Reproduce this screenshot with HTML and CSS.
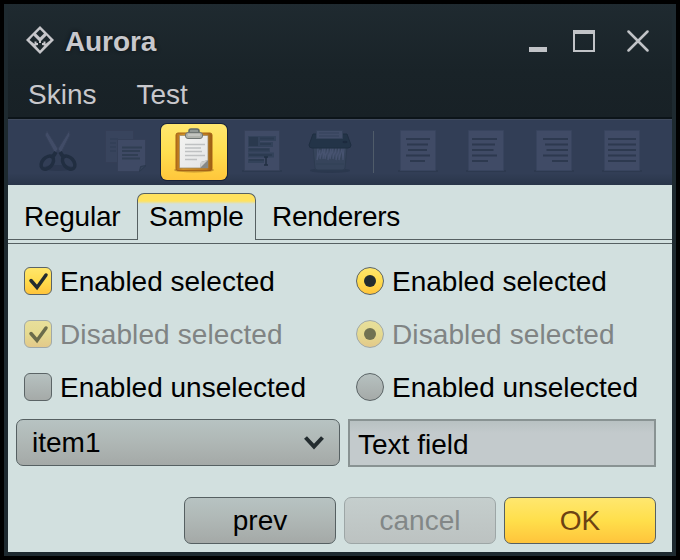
FILE: index.html
```html
<!DOCTYPE html>
<html lang="en">
<head>
<meta charset="utf-8">
<title>Aurora</title>
<link rel="stylesheet" href="styles.css">
</head>
<body>
<div class="window">
  <header class="header">
    <div class="titlebar">
      <svg class="logo" width="30" height="30" viewBox="0 0 30 30">
        <path d="M15 1 29 15 15 29 1 15Z" fill="#c6c6ca"/>
        <g fill="#1c272c">
          <path d="m15 4.500 4 4-4 4-4-4z"/>
          <path d="m8.500 10.500 5.500 5.500v2h-2.500v-1.500H9.500v2.500L4.500 15z"/>
          <path d="m21.500 10.500-5.500 5.500v2h2.500v-1.500h2v2.500l5-4z"/>
          <path d="m10.500 20.500 2.500-.5v-2h4v2l2.500.5L15 25.500z"/>
        </g>
      </svg>
      <h1 class="title">Aurora</h1>
      <div class="controls">
        <svg width="18" height="22" viewBox="0 0 18 22"><path d="M0 17h18v5H0z" fill="#c1c3c7"/></svg>
        <svg width="22" height="22" viewBox="0 0 22 22"><path fill="#c1c3c7" fill-rule="evenodd" d="M0 0h22v22H0zM2 4v16h18V4z"/></svg>
        <svg width="22" height="22" viewBox="0 0 22 22"><path d="m1.500 1.500 19 19m0-19-19 19" stroke="#c1c3c7" stroke-width="2.500" stroke-linecap="round"/></svg>
      </div>
    </div>
    <nav class="menu"><span>Skins</span><span>Test</span></nav>
  </header>
  <div class="toolbar">
    <span class="tool">
      <svg width="44" height="48" viewBox="0 0 44 48">
        <ellipse cx="22" cy="41" rx="16" ry="3" fill="#28344a" opacity=".6"/>
        <path d="m11 4 13 21-4 3L9 8zM33 4 20 25l4 3L34 8z" fill="#414c67" stroke="#364159"/>
        <g fill="none" stroke="#212e41" stroke-width="3.500">
          <ellipse cx="11" cy="35.500" rx="5" ry="7.500" transform="rotate(42 11 36)"/>
          <ellipse cx="33" cy="35.500" rx="5" ry="7.500" transform="rotate(-42 33 36)"/>
          <path d="m16 31 4-6m8 6-4-6" stroke-width="4"/>
        </g>
      </svg>
    </span>
    <span class="tool">
      <svg width="44" height="48" viewBox="0 0 44 48">
        <path d="M1.500 3.500h28v32h-28z" fill="#38445d" stroke="#343e56"/>
        <path d="M6 12h8M6 16h6M6 20h6M6 24h6" stroke="#334058" stroke-width="2"/>
        <path d="M13.500 12.500h28v26l-6 6h-22z" fill="#3f4a65" stroke="#343f57"/>
        <path d="M18 20.500h20M18 24h18M18 28h16M18 31.500h18" stroke="#303e53" stroke-width="2"/>
        <path d="m35.500 44.500 1-5 5.500-1z" fill="#354259" stroke="#2b394e"/>
      </svg>
    </span>
    <span class="tool tool-active">
      <svg width="44" height="48" viewBox="0 0 44 48">
        <defs><linearGradient id="board" x2="1" y2="0"><stop stop-color="#b5711c"/><stop offset=".2" stop-color="#d19127"/><stop offset=".85" stop-color="#bd7a1e"/><stop offset="1" stop-color="#965b14"/></linearGradient>
        <linearGradient id="paper" y2="1"><stop stop-color="#f3f3f1"/><stop offset="1" stop-color="#e4e5e6"/></linearGradient></defs>
        <ellipse cx="22" cy="43" rx="20" ry="2.500" fill="#9b6a20" opacity=".55"/>
        <rect x="4" y="6" width="36" height="37.500" rx="2" fill="url(#board)" stroke="#a66316"/>
        <path d="M7.500 8.500h28.500v32.500H7.500z" fill="url(#paper)" stroke="#9a8761" stroke-width=".7"/>
        <path d="M13 17.500h20M13 21h16M13 24.500h17M13 28.500h20M13 32.500h12" stroke="#bfc1c2" stroke-width="1.600"/>
        <path d="M36 33v8h-8l1-6z" fill="#868987"/><path d="m36 33-8 8 1-6z" fill="#cfd0cd"/>
        <path d="M17 7V4q0-2 2-2h6q2 0 2 2v3" fill="#929995" stroke="#606a69" stroke-width="1.500"/>
        <rect x="13.500" y="5.500" width="17" height="6" rx="2.500" fill="#b0b3ac" stroke="#707774"/>
        <path d="M16 8h12" stroke="#ced0cb" stroke-width="1.300"/>
      </svg>
    </span>
    <span class="tool">
      <svg width="44" height="48" viewBox="0 0 44 48">
        <path d="M2 43h40v2H2z" fill="#2c394f"/>
        <path d="M4.500 3.500h35v40h-35z" fill="#404b66" stroke="#364159"/>
        <path d="M8 9h28v5H20v1h13v5H8zM8 21h22v4H8zM8 25.500h26v5H8zM8 32h16v4H8z" fill="#33425a"/>
        <path d="M9 10h9v9H9z" fill="#2a394e"/>
        <path d="M20 11.500h14M20 17h11M9 22.500h20M9 28h23M9 33h15" stroke="#2c3b51" stroke-width="1.800"/>
        <path d="M24 30h4m-2 0v8m-2 0h4" stroke="#202f42" stroke-width="1.500"/>
      </svg>
    </span>
    <span class="tool">
      <svg width="44" height="48" viewBox="0 0 44 48">
        <ellipse cx="22" cy="43.500" rx="20" ry="2.500" fill="#2b384e"/>
        <path d="M5 20h34l-2 21q0 2-3 2H10q-3 0-3-2z" fill="#36445b" stroke="#2d3b50"/>
        <path d="M8 37h28" stroke="#314057"/>
        <path d="m10 21-1 12 3-10v9l3-11v11l2-11v11l3-11v12l3-12-1 11 3-11v11l3-11v12l3-12v12l3-12 1 12 1-12" fill="none" stroke="#475370" stroke-width="1.200"/>
        <path d="M5 7h34l4 11q0 3-3 3H4q-3 0-3-3z" fill="#233448" stroke="#1f2e41"/>
        <path d="M8.500 3.500h26v8h-26z" fill="#414d68" stroke="#34425a"/>
        <path d="M11 6h20M11 9h20" stroke="#35435b"/><ellipse cx="37" cy="15" rx="2.500" ry="1.300" fill="#1c2a3e"/>
      </svg>
    </span>
    <i class="separator"></i>
    <span class="tool"><svg width="44" height="48" viewBox="0 0 44 48"><path class="foot" d="M2 43h40v2H2z"/><path class="page" d="M4.500 3.500h35v40h-35z"/><path class="lines" d="M10 12h24M11 17.500h21M12 23h19M10 28.500h24M14 34h15"/></svg></span>
    <span class="tool"><svg width="44" height="48" viewBox="0 0 44 48"><path class="foot" d="M2 43h40v2H2z"/><path class="page" d="M4.500 3.500h35v40h-35z"/><path class="lines" d="M8 12h25M8 17.500h23M8 23h21.500M8 28.500h25M8 34h16"/></svg></span>
    <span class="tool"><svg width="44" height="48" viewBox="0 0 44 48"><path class="foot" d="M2 43h40v2H2z"/><path class="page" d="M4.500 3.500h35v40h-35z"/><path class="lines" d="M11 12h25M13 17.500h23M14.500 23H36M11 28.500h25M20 34h16"/></svg></span>
    <span class="tool"><svg width="44" height="48" viewBox="0 0 44 48"><path class="foot" d="M2 43h40v2H2z"/><path class="page" d="M4.500 3.500h35v40h-35z"/><path class="lines" d="M8 12h28M8 17.500h28M8 23h28M8 28.500h28M8 34h28"/></svg></span>
  </div>
  <main class="content">
    <div class="tabs">
      <span class="tab tab-first">Regular</span>
      <span class="tab tab-active">Sample</span>
      <span class="tab tab-last">Renderers</span>
    </div>
    <div class="options">
      <div class="option"><span class="mark selected"><svg width="26" height="26" viewBox="0 0 26 26"><path class="check" d="m6 12.500 6 7L21 7"/></svg></span>Enabled selected</div>
      <div class="option"><span class="mark radio selected"><i class="dot"></i></span>Enabled selected</div>
      <div class="option disabled"><span class="mark selected"><svg width="26" height="26" viewBox="0 0 26 26"><path class="check" d="m6 12.500 6 7L21 7"/></svg></span>Disabled selected</div>
      <div class="option disabled"><span class="mark radio selected"><i class="dot"></i></span>Disabled selected</div>
      <div class="option"><span class="mark"></span>Enabled unselected</div>
      <div class="option"><span class="mark radio"></span>Enabled unselected</div>
    </div>
    <div class="fields">
      <div class="combo">item1<svg width="22" height="16" viewBox="0 0 22 16"><path d="m2.500 2.500 8.500 9 8.500-9" fill="none" stroke="#232c2f" stroke-width="4"/></svg></div>
      <div class="textfield">Text field</div>
    </div>
    <div class="buttons">
      <button class="button">prev</button>
      <button class="button cancel" disabled>cancel</button>
      <button class="button ok">OK</button>
    </div>
  </main>
</div>
</body>
</html>
```
FILE: styles.css
```css
* { box-sizing: border-box; }
body {
  margin: 0;
  width: 680px;
  height: 560px;
  padding: 4px;
  background: #000;
  font: 28px/32px "Liberation Sans", Arial, sans-serif;
  color: #000;
  overflow: hidden;
}
svg { display: block; flex: none; }
.window {
  height: 552px;
  padding: 0 4px 4px;
  background: #1e2a30;
  display: flex;
  flex-direction: column;
}
.header {
  height: 115px;
  background: linear-gradient(#1f2a30, #192328 60%, #182126);
  border-bottom: 2px solid #0c1419;
  color: #c8c8cc;
}
.titlebar { display: flex; align-items: center; height: 74px; padding: 0 23px 0 17px; }
.logo { margin-top: -2px; }
.title {
  margin: 2px 0 0 10px;
  font-size: 28px;
  letter-spacing: -.1px;
  text-shadow: 0 0 4px #0b1013;
}
.controls { display: flex; gap: 26px; margin-left: auto; }
.controls svg:last-child { margin-left: 6px; }
.menu { display: flex; gap: 40px; padding: 1px 20px 0; }
.toolbar {
  height: 66px;
  padding: 4px 0 0 17px;
  display: flex;
  gap: 2px;
  background: linear-gradient(#323e56 82%, #293549);
  border-top: 1px solid #414b5e;
}
.tool { width: 66px; height: 56px; padding-top: 3px; display: flex; justify-content: center; border-radius: 6px; }
.tool-active {
  background: linear-gradient(#ffe76f, #ffdf50 50%, #ffc63b);
  box-shadow: 0 0 0 1px #182238;
}
.separator { width: 1px; height: 42px; margin: 7px 9px 0 8px; background: #505c6a; }
.foot { fill: #2d394f; }
.page { fill: #404b66; stroke: #38445e; }
.lines { stroke: #2d394f; stroke-width: 2; }
.content { height: 367px; background: #d2e0df; }
.tabs {
  display: flex;
  height: 59px;
  padding-top: 8px;
  border-bottom: 1px solid #566062;
}
.tab { height: 47px; border-bottom: 1px solid #566062; padding-top: 8px; white-space: nowrap; }
.tab-first { width: 129px; padding-left: 16px; letter-spacing: -.25px; }
.tab-active {
  width: 119px;
  padding: 7px 0 0 11px;
  border: 1px solid #566062;
  border-bottom: 0;
  border-radius: 7px 7px 0 0;
  background: linear-gradient(#ffe25f 7px, #d2e0df 10px);
}
.tab-last { flex: 1; padding-left: 16px; letter-spacing: -.3px; }
.options {
  display: grid;
  grid-template-columns: 332px 1fr;
  grid-template-rows: repeat(3, 53px);
  padding: 11px 0 0 16px;
}
.option { display: flex; align-items: center; gap: 8px; white-space: nowrap; }
.disabled { color: #808484; letter-spacing: .1px; }
.mark {
  width: 28px;
  height: 28px;
  margin-bottom: 2px;
  flex: none;
  border: 1px solid #5b6466;
  border-radius: 6px;
  background: linear-gradient(#b6c1c0, #a5aaa8);
}
.selected { background: linear-gradient(#ffe66b, #ffdc4e 50%, #ffc43b); }
.radio { border-radius: 50%; display: flex; align-items: center; justify-content: center; }
.dot { width: 12px; height: 12px; border-radius: 50%; background: #232c2f; }
.check { fill: none; stroke: #232c2f; stroke-width: 3.5; stroke-linecap: round; }
.disabled .mark { border-color: #a0a9a9; background: linear-gradient(#e8df9b, #e5da90 50%, #e3c98a); }
.disabled .dot { background: #717252; }
.disabled .check { stroke: #6b6c4b; }
.fields { display: grid; grid-template-columns: 324px 308px; gap: 8px; padding: 5px 0 0 8px; }
.combo {
  height: 47px;
  padding: 0 14px 0 15px;
  display: flex;
  align-items: center;
  justify-content: space-between;
  border: 1px solid #566062;
  border-radius: 7px;
  background: linear-gradient(#b7c3c2, #afb7b5 50%, #a4a9a7);
}
.textfield {
  height: 48px;
  padding: 8px 0 0 8px;
  border: 2px solid #899393;
  background: linear-gradient(#b8c1c2, #c3cacc 12px);
}
.buttons { display: flex; justify-content: flex-end; gap: 8px; padding: 30px 16px 0 0; }
.button {
  width: 152px;
  height: 47px;
  padding: 1px 0 0;
  font: inherit;
  color: #000;
  border: 1px solid #566062;
  border-radius: 7px;
  background: linear-gradient(#b7c3c2, #afb7b5 50%, #a4a9a7);
}
.cancel { color: #828787; border-color: #9da6a6; background: linear-gradient(#c5cecd, #bcc2c1); }
.ok { color: #6c4213; background: linear-gradient(#ffe76f, #ffdf4b 50%, #ffc43b); }
```
